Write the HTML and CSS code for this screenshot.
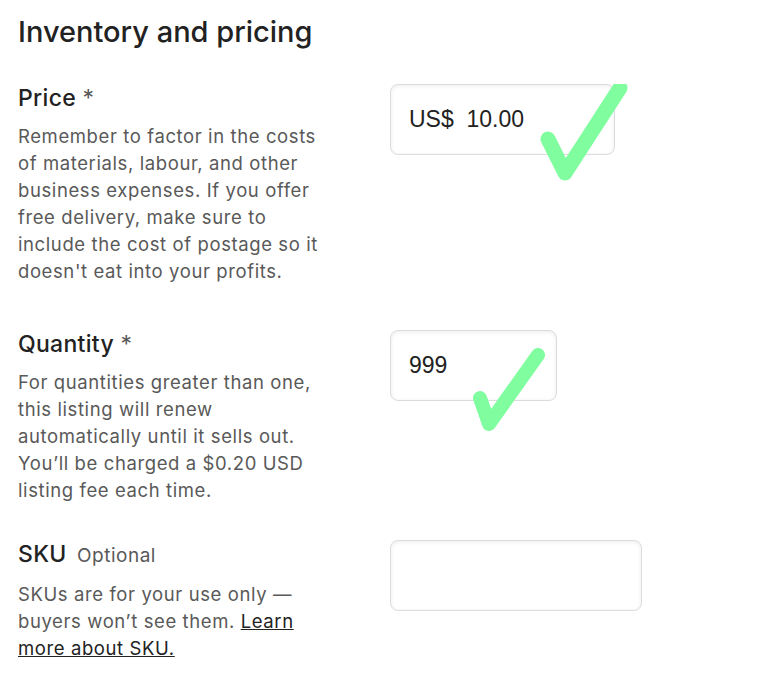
FILE: index.html
```html
<!DOCTYPE html>
<html lang="en">
<head>
    <meta charset="UTF-8">
    <meta name="viewport" content="width=device-width, initial-scale=1.0">
    <title>Inventory and pricing</title>
    <link rel="stylesheet" href="styles.css">
</head>
<body>
    <div class="panel">
        <h2 class="title">Inventory and pricing</h2>

        <div class="field field-price">
            <div class="info">
                <label class="label">Price <span class="req">*</span></label>
                <p class="hint">Remember to factor in the costs of materials, labour, and other business expenses. If you offer free delivery, make sure to include the cost of postage so it doesn't eat into your profits.</p>
            </div>
            <div class="control">
                <div class="input input-price">US$&nbsp; 10.00</div>
                <svg class="check check-price" width="100" height="110" viewBox="0 0 100 110">
                    <path d="M20 55 L37 89 L92 4" fill="none" stroke="#80fd9e" stroke-width="15" stroke-linecap="round" stroke-linejoin="round"/>
                </svg>
            </div>
        </div>

        <div class="field field-qty">
            <div class="info">
                <label class="label">Quantity <span class="req">*</span></label>
                <p class="hint">For quantities greater than one, this listing will renew automatically until it sells out. You’ll be charged a $0.20 USD listing fee each time.</p>
            </div>
            <div class="control">
                <div class="input input-qty">999</div>
                <svg class="check check-qty" width="90" height="100" viewBox="0 0 90 100">
                    <path d="M10 62 L19 88 L68 19" fill="none" stroke="#80fd9e" stroke-width="14" stroke-linecap="round" stroke-linejoin="round"/>
                </svg>
            </div>
        </div>

        <div class="field field-sku">
            <div class="info">
                <label class="label">SKU <span class="opt">Optional</span></label>
                <p class="hint">SKUs are for your use only — buyers won’t see them. <a href="#">Learn more about SKU.</a></p>
            </div>
            <div class="control">
                <div class="input input-sku"></div>
            </div>
        </div>
    </div>
</body>
</html>
```

FILE: styles.css
```css
body {
    margin: 0;
    background: #fff;
    font-family: Inter, "Noto Sans", sans-serif;
    color: #222;
}
.panel {
    padding: 14px 18px;
}
.title {
    margin: 0 0 34px;
    font-size: 29px;
    font-weight: 500;
    line-height: 36px;
}
.field {
    display: flex;
}
.field-price {
    margin-bottom: 45px;
}
.field-qty {
    margin-bottom: 36px;
}
.info {
    width: 310px;
}
.label {
    display: block;
    font-size: 23px;
    font-weight: 500;
    line-height: 28px;
    letter-spacing: 0.3px;
    margin-bottom: 11px;
}
.req {
    font-weight: 400;
    color: #595959;
}
.opt {
    font-size: 19px;
    font-weight: 400;
    letter-spacing: 0.5px;
    color: #595959;
    margin-left: 4px;
}
.hint {
    margin: 0;
    font-size: 18.5px;
    line-height: 27px;
    letter-spacing: 0.6px;
    color: #595959;
}
.hint a {
    color: #222;
}
.control {
    position: relative;
    margin-left: 62px;
}
.input {
    box-sizing: border-box;
    height: 71px;
    border: 1px solid #dcdcdc;
    border-radius: 8px;
    box-shadow: inset 0 1px 4px rgba(0, 0, 0, 0.08);
    padding: 0 18px;
    display: flex;
    align-items: center;
    font-family: "Liberation Sans", Arial, sans-serif;
    font-size: 23px;
    color: #222;
}
.input-price { width: 225px; }
.input-qty { width: 167px; }
.input-sku { width: 252px; }
.check {
    position: absolute;
}
.check-price {
    left: 138px;
    top: 0;
}
.check-qty {
    left: 80px;
    top: 6px;
}
```
